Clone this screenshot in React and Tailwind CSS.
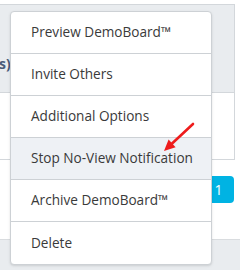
import React from "react";

const ITEMS = [
  "Preview DemoBoard™",
  "Invite Others",
  "Additional Options",
  "Stop No-View Notification",
  "Archive DemoBoard™",
  "Delete",
];

const HOVERED = 3;

export default function App() {
  return (
    <div
      className="relative w-[240px] h-[270px] overflow-hidden bg-white"
      style={{ fontFamily: '"Open Sans", "Noto Sans", Arial, sans-serif' }}
    >
      {/* Background table */}
      <div className="h-[4px]" />
      <div className="w-[235px] border-t border-r border-[#d3d7db]">
        <div className="h-[88px] bg-[#e9ecef] border-b border-[#d3d7db] pt-[49px]">
          <span className="block text-[14px] leading-[20px] font-bold text-[#4a5b78] -ml-[1px]">s)</span>
        </div>
        <div className="h-[67px] border-b border-[#d3d7db]" />
      </div>
      <div className="h-[79px] w-[235px] flex justify-end pt-[16px]">
        <div className="w-[31px] h-[27px] bg-[#00b3e3] rounded-r-[4px] mr-[1px] flex items-center justify-center text-white text-[14px]">
          1
        </div>
      </div>
      <div className="h-[32px] bg-[#e9ecef] border-t border-[#d9dcdf]" />

      {/* Dropdown menu */}
      <div className="absolute left-[10px] top-[11px] w-[202px] bg-white border border-[#cdd1d5] rounded-[4px] shadow-sm overflow-hidden">
        {ITEMS.map((label, i) => (
          <div
            key={label}
            className={`h-[42px] flex items-center pl-[20px] text-[13.6px] text-[#3a3a3a] ${
              i < ITEMS.length - 1 ? "border-b border-[#cdd1d5]" : ""
            } ${i === HOVERED ? "bg-[#eef1f5]" : ""}`}
          >
            {label}
          </div>
        ))}
      </div>

      {/* Red annotation arrow */}
      <svg className="absolute left-0 top-0" width="240" height="270" viewBox="0 0 240 270">
        <line x1="193" y1="124" x2="171" y2="144.5" stroke="#ee1c1c" strokeWidth="2.6" strokeLinecap="round" />
        <polygon points="164,151 175.6,147.2 168.6,139.6" fill="#ee1c1c" />
      </svg>
    </div>
  );
}
